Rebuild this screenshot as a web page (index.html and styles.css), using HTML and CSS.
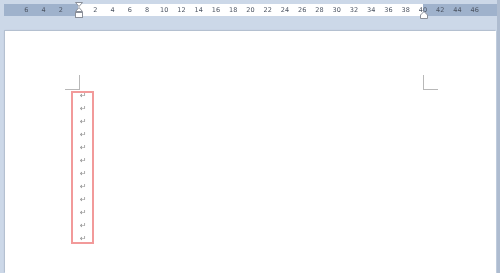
FILE: index.html
```html
<!DOCTYPE html>
<html>
<head>
<meta charset="utf-8">
<link rel="stylesheet" href="styles.css">
</head>
<body>
<div class="app">
  <div class="main">
    <div class="ruler">
      <div class="scale">
        <span>6</span><span>4</span><span>2</span><span></span><span>2</span><span>4</span><span>6</span><span>8</span><span>10</span><span>12</span><span>14</span><span>16</span><span>18</span><span>20</span><span>22</span><span>24</span><span>26</span><span>28</span><span>30</span><span>32</span><span>34</span><span>36</span><span>38</span><span>40</span><span>42</span><span>44</span><span>46</span>
      </div>
      <svg class="indent-left" width="8" height="17" viewBox="0 0 8 17">
        <path d="M0.5 0.5 H7.5 L4 4.5 Z" fill="#fff" stroke="#8a8f99" stroke-width="1"/>
        <path d="M4 5.5 L7.5 9.5 H0.5 Z" fill="#fff" stroke="#8a8f99" stroke-width="1"/>
        <rect x="0.5" y="10.5" width="7" height="5" fill="#fff" stroke="#8a8f99" stroke-width="1"/>
      </svg>
      <svg class="indent-right" width="8" height="8" viewBox="0 0 8 8">
        <path d="M4 0.5 L7.5 4 V7.5 H0.5 V4 Z" fill="#fff" stroke="#8a8f99" stroke-width="1"/>
      </svg>
    </div>
    <div class="page">
      <div class="corners">
        <div class="corner corner-left"></div>
        <div class="corner corner-right"></div>
      </div>
      <div class="text">
        <div class="para">↵</div>
        <div class="para">↵</div>
        <div class="para">↵</div>
        <div class="para">↵</div>
        <div class="para">↵</div>
        <div class="para">↵</div>
        <div class="para">↵</div>
        <div class="para">↵</div>
        <div class="para">↵</div>
        <div class="para">↵</div>
        <div class="para">↵</div>
        <div class="para">↵</div>
        <div class="highlight"></div>
      </div>
    </div>
  </div>
  <div class="vscroll"></div>
</div>
</body>
</html>
```
FILE: styles.css
```css
html, body {
  margin: 0;
  padding: 0;
  height: 100%;
  overflow: hidden;
}
body {
  background: #ccd8e8;
  font-family: "DejaVu Sans", "Liberation Sans", sans-serif;
}
.app {
  display: flex;
  height: 273px;
}
.main {
  flex: 1;
  display: flex;
  flex-direction: column;
}
.vscroll {
  width: 3px;
  background: #aebcd0;
}
.ruler {
  position: relative;
  margin: 4px 0 0 4px;
  width: 493px;
  height: 12px;
  background: linear-gradient(to right, #9fb2cc 0, #9fb2cc 74px, #ffffff 74px, #ffffff 419px, #9fb2cc 419px);
}
.scale {
  display: flex;
  padding-left: 13.6px;
  height: 12px;
  align-items: center;
  will-change: transform;
  -webkit-font-smoothing: antialiased;
}
.scale span {
  flex: 0 0 17.25px;
  text-align: center;
  font-size: 6.5px;
  color: #4c5462;
  line-height: 12px;
}
.indent-left {
  position: absolute;
  left: 71px;
  top: -2px;
}
.indent-right {
  position: absolute;
  left: 416px;
  top: 7px;
}
.page {
  margin: 15px 0 0 5px;
  width: 491px;
  flex: 1;
  background: #ffffff;
  box-shadow: -1px -1px 0 #b4c0d0, 0 0 2px rgba(90, 110, 140, 0.35);
}
.corners {
  display: flex;
  justify-content: space-between;
  padding: 44px 58px 0 60px;
}
.corner {
  width: 14px;
  height: 14px;
}
.corner-left {
  border-right: 1px solid #b8b8b8;
  border-bottom: 1px solid #b8b8b8;
}
.corner-right {
  border-left: 1px solid #b8b8b8;
  border-bottom: 1px solid #b8b8b8;
}
.text {
  position: relative;
  margin: -1px 0 0 75px;
  width: 20px;
  will-change: transform;
}
.para {
  height: 13px;
  line-height: 13px;
  font-size: 8px;
  color: #8c8c8c;
}
.highlight {
  position: absolute;
  left: -9px;
  top: 2px;
  width: 19px;
  height: 149px;
  border: 2px solid #f29a9a;
}
```
